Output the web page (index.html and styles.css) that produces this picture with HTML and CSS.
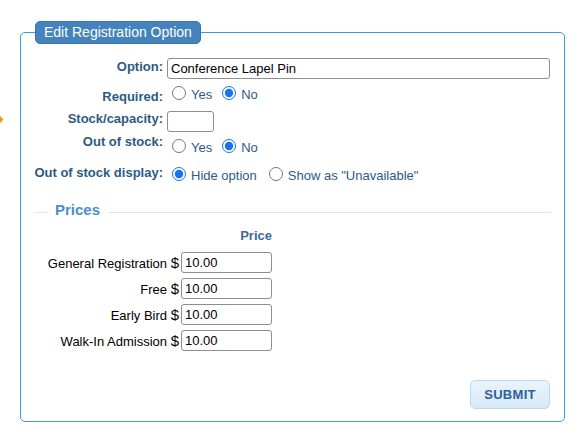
FILE: index.html
```html
<!DOCTYPE html>
<html>
<head>
<meta charset="utf-8">
<link rel="stylesheet" href="styles.css">
</head>
<body>
<span class="pointer"></span>
<form class="form">
  <fieldset class="box">
    <legend class="box-title">Edit Registration Option</legend>
    <div class="fields">
      <div class="row row-option">
        <label class="lbl">Option:</label>
        <div class="val"><input class="text text-wide" type="text" value="Conference Lapel Pin"></div>
      </div>
      <div class="row row-required">
        <label class="lbl">Required:</label>
        <div class="val">
          <label class="choice"><input type="radio" name="req"><span>Yes</span></label>
          <label class="choice"><input type="radio" name="req" checked><span>No</span></label>
        </div>
      </div>
      <div class="row row-stock">
        <label class="lbl">Stock/capacity:</label>
        <div class="val"><input class="text text-small" type="text" value=""></div>
      </div>
      <div class="row row-oos">
        <label class="lbl">Out of stock:</label>
        <div class="val">
          <label class="choice"><input type="radio" name="oos"><span>Yes</span></label>
          <label class="choice"><input type="radio" name="oos" checked><span>No</span></label>
        </div>
      </div>
      <div class="row row-display">
        <label class="lbl">Out of stock display:</label>
        <div class="val">
          <label class="choice choice-wide"><input type="radio" name="disp" checked><span>Hide option</span></label>
          <label class="choice"><input type="radio" name="disp"><span>Show as "Unavailable"</span></label>
        </div>
      </div>
    </div>

    <div class="prices">
      <div class="sec-head">
        <span class="rule rule-short"></span>
        <span class="sec-title">Prices</span>
        <span class="rule rule-long"></span>
      </div>
      <div class="price-grid">
        <div class="price-head">Price</div>
        <label class="price-lbl">General Registration <span class="cur">$</span></label>
        <input class="text text-price" type="text" value="10.00">
        <label class="price-lbl">Free <span class="cur">$</span></label>
        <input class="text text-price" type="text" value="10.00">
        <label class="price-lbl">Early Bird <span class="cur">$</span></label>
        <input class="text text-price" type="text" value="10.00">
        <label class="price-lbl">Walk-In Admission <span class="cur">$</span></label>
        <input class="text text-price" type="text" value="10.00">
      </div>
    </div>

    <div class="actions">
      <button class="submit" type="button">SUBMIT</button>
    </div>
  </fieldset>
</form>
</body>
</html>
```

FILE: styles.css
```css
* { box-sizing: border-box; }

body {
  margin: 0;
  padding: 21px 19px 0 20px;
  background: #fff;
  color: #000;
  font-family: "Liberation Sans", Arial, sans-serif;
  position: relative;
}

.pointer {
  position: absolute;
  left: -5px;
  top: 116px;
  width: 7px;
  height: 7px;
  background: #f7941d;
  transform: rotate(45deg);
}

.form { margin: 0; }

.box {
  margin: 0;
  padding: 0 0 12px 0;
  min-width: 0;
  border: 1px solid #3b9ad9;
  border-radius: 5px;
}

.box-title {
  margin-left: 14px;
  padding: 0 8px;
  height: 23px;
  line-height: 21px;
  font-size: 14px;
  color: #fff;
  background: #4483bc;
  border: 1px solid #3a74aa;
  border-radius: 5px;
}

.fields { padding-top: 14px; }

.row {
  display: flex;
  align-items: flex-start;
}

.lbl {
  flex: none;
  width: 142px;
  margin-right: 4px;
  text-align: right;
  font-size: 13px;
  font-weight: bold;
  line-height: 15px;
  color: #2c5a84;
}

.val {
  display: flex;
  align-items: flex-start;
}

.row-option .lbl { padding-top: 1px; }
.row-required { margin-top: 7px; }
.row-required .lbl { padding-top: 3px; }
.row-stock { margin-top: 7px; }
.row-oos { margin-top: 2px; }
.row-oos .val { padding-top: 5px; }
.row-display { margin-top: 9px; }
.row-display .val { padding-top: 2px; }

.text {
  height: 21px;
  margin: 0;
  padding: 0 3px;
  border: 1px solid #8d8d94;
  border-radius: 3px;
  background: #fff;
  font-family: "Liberation Sans", Arial, sans-serif;
  font-size: 13px;
  color: #000;
}

.text-wide { width: 383px; }
.text-small { width: 47px; }
.text-price { width: 91px; }

.choice {
  display: inline-flex;
  align-items: flex-start;
  margin-right: 5px;
  font-size: 13px;
  line-height: 17px;
  color: #2b5a87;
}

.choice-wide { margin-right: 7px; }

.choice input {
  width: 14px;
  height: 14px;
  margin: 0 5px 0 5px;
  accent-color: #1673f0;
}

.prices { margin: 18px 13px 0 13px; }

.sec-head {
  display: flex;
  align-items: flex-start;
}

.rule {
  height: 1px;
  margin-top: 10px;
  background: #dde3e8;
}

.rule-short { width: 13px; flex: none; }
.rule-long { flex: 1; }

.sec-title {
  margin: 0 9px 0 8px;
  font-size: 15px;
  font-weight: bold;
  line-height: 15px;
  color: #4a90c8;
}

.price-grid {
  display: grid;
  grid-template-columns: 145px 91px;
  column-gap: 2px;
  row-gap: 5px;
  align-items: center;
  margin-top: 11px;
}

.price-head {
  grid-column: 2;
  margin-bottom: 4px;
  text-align: right;
  font-size: 13px;
  font-weight: bold;
  line-height: 15px;
  color: #3a6b9a;
}

.price-lbl {
  text-align: right;
  font-size: 13px;
  line-height: 15px;
  white-space: nowrap;
}

.cur { font-size: 15px; }

.actions {
  display: flex;
  justify-content: flex-end;
  margin: 29px 14px 0 0;
}

.submit {
  width: 80px;
  height: 29px;
  padding: 0;
  border: 1px solid #bcd9ef;
  border-radius: 5px;
  background: linear-gradient(#eaf4fc, #d6e9f8);
  font-family: "Liberation Sans", Arial, sans-serif;
  font-size: 13px;
  font-weight: bold;
  letter-spacing: 0.3px;
  color: #2f6195;
}
```
